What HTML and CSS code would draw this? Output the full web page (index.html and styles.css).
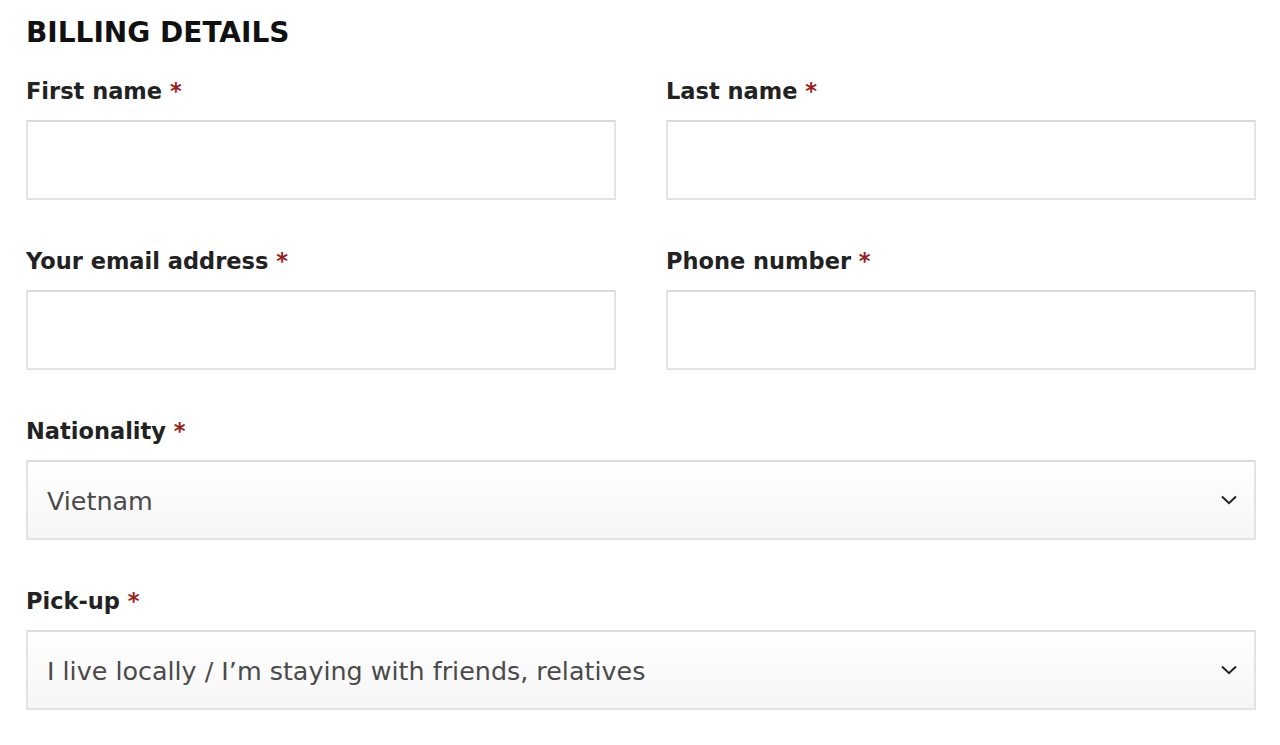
FILE: index.html
```html
<!DOCTYPE html>
<html>
<head>
<meta charset="utf-8">
<link rel="stylesheet" href="styles.css">
</head>
<body>
<div class="billing">
  <h3 class="title">BILLING DETAILS</h3>
  <div class="grid">
    <div class="field">
      <label class="label">First name <span class="req">*</span></label>
      <input class="input" type="text">
    </div>
    <div class="field">
      <label class="label">Last name <span class="req">*</span></label>
      <input class="input" type="text">
    </div>
    <div class="field">
      <label class="label">Your email address <span class="req">*</span></label>
      <input class="input" type="text">
    </div>
    <div class="field">
      <label class="label">Phone number <span class="req">*</span></label>
      <input class="input" type="text">
    </div>
    <div class="field wide">
      <label class="label">Nationality <span class="req">*</span></label>
      <div class="select">
        <span class="select-text">Vietnam</span>
        <svg class="chev" width="16" height="10" viewBox="0 0 16 10"><path d="M1 1.5 L8 8.2 L15 1.5" fill="none" stroke="#222" stroke-width="2"/></svg>
      </div>
    </div>
    <div class="field wide">
      <label class="label">Pick-up <span class="req">*</span></label>
      <div class="select">
        <span class="select-text">I live locally / I’m staying with friends, relatives</span>
        <svg class="chev" width="16" height="10" viewBox="0 0 16 10"><path d="M1 1.5 L8 8.2 L15 1.5" fill="none" stroke="#222" stroke-width="2"/></svg>
      </div>
    </div>
  </div>
</div>
</body>
</html>
```
FILE: styles.css
```css
html, body {
  margin: 0;
  padding: 0;
  background: #fff;
}
body {
  font-family: "DejaVu Sans", "Liberation Sans", sans-serif;
  color: #1c1c1c;
}
.billing {
  padding: 17px 24px 0 26px;
}
.title {
  margin: 0;
  font-size: 28px;
  line-height: 32px;
  font-weight: 700;
  color: #111;
}
.grid {
  display: grid;
  grid-template-columns: 590px 590px;
  column-gap: 50px;
  row-gap: 47px;
  margin-top: 28px;
}
.wide {
  grid-column: 1 / span 2;
}
.field {
  display: flex;
  flex-direction: column;
}
.label {
  font-size: 22.5px;
  line-height: 28px;
  font-weight: 700;
  color: #222;
  margin-bottom: 15px;
}
.req {
  color: #9a1d1d;
}
.input {
  box-sizing: border-box;
  height: 80px;
  margin: 0;
  border: 2px solid #e3e3e3;
  border-top-color: #dadada;
  background: #fff;
  outline: none;
}
.select {
  box-sizing: border-box;
  height: 80px;
  border: 2px solid #e3e3e3;
  border-top-color: #dcdcdc;
  background: linear-gradient(#ffffff, #f6f6f6);
  display: flex;
  align-items: center;
  justify-content: space-between;
  padding: 0 17px 0 19px;
}
.select-text {
  font-size: 25.4px;
  color: #4a4a4a;
  font-weight: 400;
  padding-top: 1px;
}
.chev {
  display: block;
}
```
